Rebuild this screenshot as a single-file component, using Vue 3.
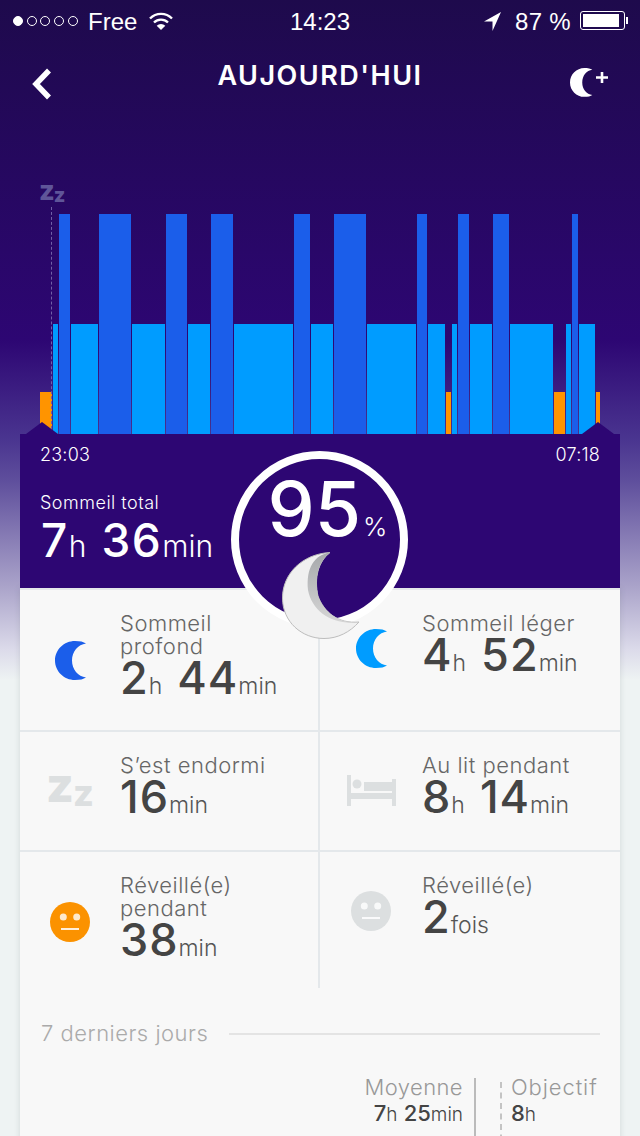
<script setup>
// start / end x of every sleep phase, in page pixels
const phases = [
  ['awake', 40, 52], ['light', 53, 58], ['deep', 59, 70], ['light', 71, 98], ['deep', 99, 131],
  ['light', 132, 165], ['deep', 166, 187], ['light', 188, 210], ['deep', 211, 233], ['light', 234, 293],
  ['deep', 294, 310], ['light', 311, 333], ['deep', 334, 366], ['light', 367, 416], ['deep', 417, 427],
  ['light', 428, 445], ['awake', 446, 451], ['light', 452, 457], ['deep', 458, 469], ['light', 470, 492],
  ['deep', 493, 509], ['light', 510, 553], ['awake', 554, 565], ['light', 566, 571], ['deep', 572, 578],
  ['light', 579, 595], ['awake', 596, 600],
]

const bars = phases.map(([kind, start, end], i) => ({
  kind,
  width: end - start,
  gap: i ? start - phases[i - 1][2] : 0,
}))

const stats = [
  { icon: 'deep', label: ['Sommeil', 'profond'], value: [['2', 'h'], ['44', 'min']] },
  { icon: 'light', label: ['Sommeil léger'], value: [['4', 'h'], ['52', 'min']] },
  { icon: 'zz', label: ['S’est endormi'], value: [['16', 'min']] },
  { icon: 'bed', label: ['Au lit pendant'], value: [['8', 'h'], ['14', 'min']] },
  { icon: 'awake', label: ['Réveillé(e)', 'pendant'], value: [['38', 'min']] },
  { icon: 'woke', label: ['Réveillé(e)'], value: [['2', 'fois']] },
]

const crescent = 'M31 2.500C28.500 .8 25 0 20 0C9 0 0 8.700 0 19.500C0 30.300 9 39 20 39C25 39 28.500 38.200 31 36.500C23 35.500 17 28.500 17 19.500C17 10.500 23 3.500 31 2.500z'
</script>

<template>
  <div class="screen">
    <!-- status bar -->
    <div class="status">
      <div class="signal">
        <i class="dot dot--on" /><i class="dot" /><i class="dot" /><i class="dot" /><i class="dot" />
      </div>
      <span class="carrier">Free</span>
      <svg class="wifi" viewBox="0 0 24 18" width="24" height="18">
        <path d="M1 6.500a15.500 15.500 0 0 1 22 0" fill="none" stroke="#fff" stroke-width="2.400" />
        <path d="M5 10.500a10 10 0 0 1 14 0" fill="none" stroke="#fff" stroke-width="2.400" />
        <path d="M12 18l-4.300-4.300a6.100 6.100 0 0 1 8.600 0z" fill="#fff" />
      </svg>
      <span class="clock">14:23</span>
      <svg class="arrow" viewBox="0 0 17 19" width="17" height="19">
        <path d="M17 0L0 9.500h8.500V19z" fill="#fff" />
      </svg>
      <span class="percent">87 %</span>
      <div class="battery"><div class="battery__fill" /></div>
      <div class="battery__nub" />
    </div>

    <!-- nav -->
    <div class="nav">
      <svg class="nav__back" viewBox="0 0 21 32" width="21" height="32">
        <path d="M18 2.500L5 16l13 13.500" fill="none" stroke="#fff" stroke-width="5.500" />
      </svg>
      <h1 class="nav__title">AUJOURD'HUI</h1>
      <svg class="nav__add" viewBox="0 0 38 30" width="38" height="30">
        <path :d="crescent" transform="translate(0 1) scale(.72 .74)" fill="#fff" />
        <path d="M26 10.500h12M32 5v11" stroke="#fff" stroke-width="2.600" fill="none" />
      </svg>
    </div>

    <!-- sleep chart -->
    <div class="chart">
      <div class="chart__zz"><span>z</span><span class="chart__zz-small">z</span></div>
      <div class="chart__start" />
      <div
        v-for="(bar, i) in bars"
        :key="i"
        class="bar"
        :class="`bar--${bar.kind}`"
        :style="{ width: bar.width + 'px', marginLeft: bar.gap + 'px' }"
      />
    </div>

    <!-- score panel -->
    <div class="panel">
      <i class="panel__peak panel__peak--start" />
      <i class="panel__peak panel__peak--end" />
      <div class="panel__times"><span>23:03</span><span>07:18</span></div>
      <div class="panel__title">Sommeil total</div>
      <div class="panel__total">
        <b>7</b><small>h</small><b class="next">36</b><small>min</small>
      </div>
      <div class="score">
        <div class="score__value"><b>95</b><small>%</small></div>
      </div>
      <svg class="score__moon" viewBox="0 0 80 88" width="80" height="88">
        <defs>
          <linearGradient id="bevel" x1="0" y1="0" x2="0" y2="1">
            <stop offset="0" stop-color="#a6a8ab" />
            <stop offset="1" stop-color="#d6d6d6" />
          </linearGradient>
        </defs>
        <path d="M48 .5C20 2 .5 22 .5 46C.5 70 20 86.500 42 86.500C56 86.500 68 80 77 70C56 72 42 60 36 44C32 26 36 10 48 .5z" fill="#f0f0f0" stroke="#bdbdbd" />
        <path d="M48 .5C32 3 24 16 26 38C30 60 52 74 77 70C56 72 42 60 36 44C32 26 36 10 48 .5z" fill="url(#bevel)" />
      </svg>
    </div>

    <!-- detail card -->
    <div class="card">
      <div class="grid">
        <div v-for="stat in stats" :key="stat.icon" class="cell">
          <div class="cell__row">
            <div class="cell__icon" :class="`cell__icon--${stat.icon}`">
              <svg v-if="stat.icon === 'deep' || stat.icon === 'light'" viewBox="0 0 31 39" width="31" height="39">
                <path :d="crescent" />
              </svg>
              <div v-else-if="stat.icon === 'zz'" class="zz"><span>z</span><span class="zz__small">z</span></div>
              <svg v-else-if="stat.icon === 'bed'" viewBox="0 0 49 31" width="49" height="31">
                <path d="M0 0h4v18h41v-14h4v27h-4v-7H4v7H0z" fill="#dcdfe0" />
                <circle cx="10" cy="9" r="4.500" fill="#dcdfe0" />
                <path d="M17 7h28v9H17z" fill="#dcdfe0" />
              </svg>
              <svg v-else viewBox="0 0 40 40" width="40" height="40">
                <circle class="face" cx="20" cy="20" r="20" />
                <circle cx="13.300" cy="15" r="3.500" fill="#fff" opacity=".8" />
                <circle cx="26.700" cy="15" r="3.500" fill="#fff" opacity=".8" />
                <rect x="11" y="26" width="18" height="2" fill="#fff" opacity=".85" />
              </svg>
            </div>
            <div class="cell__text">
              <div v-for="line in stat.label" :key="line" class="cell__label">{{ line }}</div>
              <div class="cell__value">
                <template v-for="part in stat.value" :key="part[1]">
                  <b>{{ part[0] }}</b><small>{{ part[1] }}</small>
                </template>
              </div>
            </div>
          </div>
        </div>
      </div>

      <div class="week">
        <span class="week__title">7 derniers jours</span>
        <i class="week__line" />
      </div>

      <div class="goals">
        <div class="goal goal--avg">
          <div class="goal__label">Moyenne</div>
          <div class="goal__value"><b>7</b><small>h</small> <b>25</b><small>min</small></div>
        </div>
        <div class="goal goal--target">
          <div class="goal__label">Objectif</div>
          <div class="goal__value"><b>8</b><small>h</small></div>
        </div>
      </div>
    </div>
  </div>
</template>

<style scoped>
.screen {
  position: relative;
  width: 640px;
  height: 1136px;
  overflow: hidden;
  display: flex;
  flex-direction: column;
  font-family: Inter, "Open Sans", sans-serif;
  background: linear-gradient(
    180deg,
    #1e0a4c 0,
    #2d0673 340px,
    #4a3590 440px,
    #5e4e9c 480px,
    #a9a2c9 585px,
    #dcdbea 650px,
    #eef3f3 680px,
    #eef3f3 100%
  );
}

/* ── status bar ─────────────────────────── */
.status {
  flex: none;
  position: relative;
  height: 44px;
  color: #fff;
  font-family: "Liberation Sans", sans-serif;
  font-size: 24px;
}
.signal {
  position: absolute;
  left: 13px;
  top: 16px;
  display: flex;
  gap: 3.700px;
}
.dot {
  width: 10px;
  height: 10px;
  box-sizing: border-box;
  border: 1px solid #fff;
  border-radius: 50%;
}
.dot--on { background: #fff; }
.carrier { position: absolute; left: 88px; top: 8px; }
.wifi { position: absolute; left: 149px; top: 12px; }
.clock { position: absolute; left: 290px; top: 8px; }
.arrow { position: absolute; left: 484px; top: 12px; }
.percent { position: absolute; left: 515px; top: 8px; letter-spacing: 0.300px; }
.battery {
  position: absolute;
  left: 580px;
  top: 11px;
  width: 45px;
  height: 19px;
  box-sizing: border-box;
  border: 1px solid #fff;
  border-radius: 3px;
  padding: 2px;
}
.battery__fill { width: 36px; height: 13px; background: #fff; }
.battery__nub { position: absolute; left: 626px; top: 17px; width: 2px; height: 7px; background: #fff; }

/* ── nav ────────────────────────────────── */
.nav {
  flex: none;
  position: relative;
  height: 60px;
}
.nav__back { position: absolute; left: 31px; top: 24px; }
.nav__title {
  margin: 0;
  padding-top: 16px;
  text-align: center;
  color: #fff;
  font-size: 27px;
  line-height: 32px;
  font-weight: 600;
  letter-spacing: 1.500px;
}
.nav__add { position: absolute; left: 570px; top: 23px; }

/* ── chart ──────────────────────────────── */
.chart {
  flex: none;
  position: relative;
  height: 330px;
  box-sizing: border-box;
  padding-left: 40px;
  display: flex;
  align-items: flex-end;
}
.bar { flex: none; }
.bar--deep { height: 220px; background: #1b5eea; }
.bar--light { height: 110px; background: #009cff; }
.bar--awake { height: 42px; background: #ff9400; }
.chart__start {
  position: absolute;
  left: 51px;
  top: 103px;
  height: 227px;
  border-left: 1px dashed #6f5fa6;
}
.chart__zz {
  position: absolute;
  left: 39px;
  top: 74px;
  color: #5f5599;
  font-size: 27px;
  line-height: 26px;
  font-weight: 800;
}
.chart__zz-small { font-size: 20px; margin-left: -1px; position: relative; top: 2px; }

/* ── panel ──────────────────────────────── */
.panel {
  flex: none;
  position: relative;
  z-index: 2;
  height: 154px;
  margin: 0 20px;
  background: #2d0673;
  color: #fff;
}
.panel__peak {
  position: absolute;
  top: -12px;
  width: 32px;
  height: 12px;
  background: #2d0673;
  clip-path: polygon(50% 0, 100% 100%, 0 100%);
}
.panel__peak--start { left: 6px; }
.panel__peak--end { left: 562px; }
.panel__times {
  display: flex;
  justify-content: space-between;
  padding: 10px 20px 0;
  font-size: 18px;
  line-height: 22px;
  font-weight: 300;
  letter-spacing: 0.200px;
}
.panel__title {
  margin: 26px 0 0 20px;
  font-size: 18px;
  line-height: 22px;
  font-weight: 300;
  letter-spacing: 0.500px;
}
.panel__total {
  margin: 0 0 0 21px;
  line-height: 52px;
  white-space: nowrap;
}
.panel__total b { font-size: 46px; font-weight: 500; letter-spacing: 1.500px; }
.panel__total small { font-size: 30px; font-weight: 300; }
.panel__total .next { margin-left: 15px; }

.score {
  position: absolute;
  left: 211px;
  top: 17px;
  width: 177px;
  height: 177px;
  box-sizing: border-box;
  border: 8px solid #fff;
  border-radius: 50%;
  background: #2d0673;
}
.score__value {
  text-align: center;
  padding: 10px 0 0 16px;
  line-height: 80px;
  white-space: nowrap;
}
.score__value b { font-size: 75px; font-weight: 500; }
.score__value small { font-size: 26px; font-weight: 300; margin-left: 2px; }
.score__moon { position: absolute; left: 262px; top: 118px; }

/* ── card ───────────────────────────────── */
.card {
  flex: 1;
  position: relative;
  margin: 0 20px;
  box-sizing: border-box;
  background: #f8f8f8;
  border-top: 2px solid #e4e8eb;
  box-shadow: 0 0 6px rgba(80, 90, 100, 0.18);
}
.grid {
  display: grid;
  grid-template-columns: 300px 300px;
  grid-template-rows: 142px 120px 136px;
}
.cell {
  box-sizing: border-box;
  border-bottom: 2px solid #e4e8eb;
  border-right: 2px solid #e4e8eb;
  padding-top: 22px;
}
.cell:nth-child(even) { border-right: 0; }
.cell:nth-child(n + 5) { border-bottom: 0; }
/* the icon sits on the middle of the text block */
.cell__row { display: flex; align-items: center; }
.cell__icon {
  flex: none;
  width: 100px;
  display: flex;
  justify-content: center;
}
.cell:nth-child(even) .cell__icon { width: 102px; }
.cell__icon--deep svg { fill: #1b5eea; }
.cell__icon--light svg { fill: #009cff; }
.cell__icon--awake .face { fill: #fb9200; }
.cell__icon--woke .face { fill: #dcdfe0; }
.cell__label {
  font-size: 22px;
  line-height: 23px;
  font-weight: 300;
  letter-spacing: 0.500px;
  color: #666;
  white-space: nowrap;
}
.cell__value {
  line-height: 40px;
  color: #444;
  white-space: nowrap;
}
.cell__value b { font-size: 45px; font-weight: 500; letter-spacing: 1px; }
.cell__value small { font-size: 23px; font-weight: 300; color: #555; }
.cell__value small + b { margin-left: 15px; }

.zz {
  height: 36px;
  color: #dcdfe0;
  font-size: 48px;
  line-height: 24px;
  font-weight: 800;
  white-space: nowrap;
}
.zz__small { font-size: 36px; position: relative; top: 4px; margin-left: -1px; }

.week {
  display: flex;
  align-items: center;
  gap: 21px;
  padding: 32px 20px 0 21px;
}
.week__title {
  font-size: 22px;
  line-height: 26px;
  font-weight: 300;
  letter-spacing: 0.500px;
  color: #aaa;
}
.week__line { flex: 1; height: 2px; background: #e4e4e4; margin-top: 1px; }

.goals {
  display: flex;
  justify-content: flex-end;
  padding: 32px 22px 0 0;
}
.goal {
  height: 90px;
  box-sizing: border-box;
  white-space: nowrap;
}
.goal--avg { text-align: right; padding-right: 11px; border-right: 2px solid #bbb; }
.goal--avg .goal__label { margin-top: -4px; }
.goal--target {
  width: 98px;
  margin: 4px 0 0 24px;
  padding-left: 9px;
  border-left: 2px dashed #c4c4c4;
}
.goal--target .goal__label { margin-top: -8px; letter-spacing: 0.900px; }
.goal__label { font-size: 22px; line-height: 26px; font-weight: 300; letter-spacing: 0.400px; color: #999; }
.goal__value { font-size: 22px; line-height: 26px; color: #444; }
.goal__value b { font-weight: 500; }
.goal__value small { font-size: 19px; font-weight: 300; }
</style>
